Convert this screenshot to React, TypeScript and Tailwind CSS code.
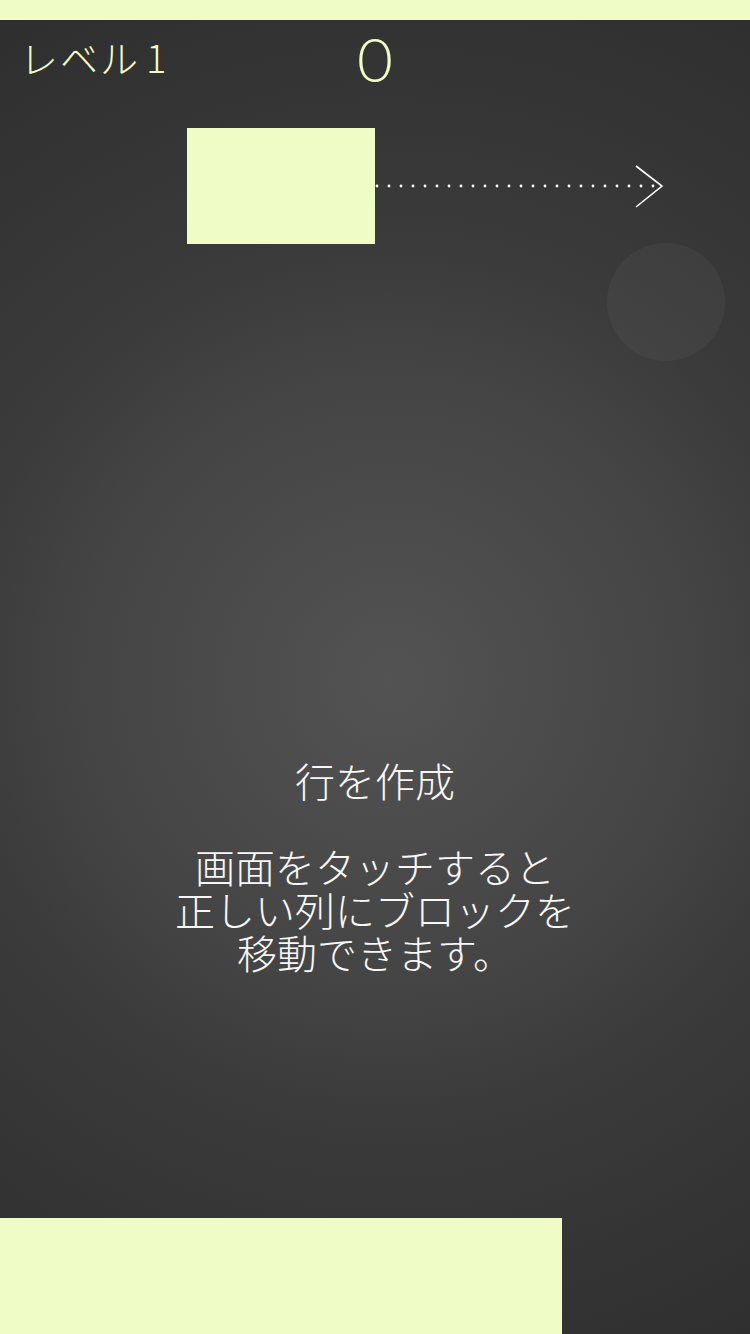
import React from "react";

export default function App() {
  const dots = Array.from({ length: 24 }, (_, k) => 2 + 12 * k);
  return (
    <div className="relative flex h-[1334px] w-[750px] flex-col overflow-hidden bg-[radial-gradient(circle_farthest-corner_at_390px_680px,#535353_0%,#444444_40%,#3b3b3b_55%,#353535_75%,#2e2e2e_100%)] font-['Noto_Sans_CJK_JP','Noto_Sans',sans-serif]">
      <div className="h-[20px] w-full shrink-0 bg-[#effcc6]" />
      <div className="grid h-[108px] shrink-0 grid-cols-3 text-[#effcc6]">
        <div className="pl-[20px] pt-[18px] text-[38px] font-light leading-none tracking-[2px]">
          レベル<span className="ml-[6px]">1</span>
        </div>
        <div className="pt-[7px] text-center font-['Lato','Noto_Sans',sans-serif] text-[62px] font-light leading-none">
          0
        </div>
        <div />
      </div>
      <div className="flex h-[116px] shrink-0 items-center">
        <div className="ml-[187px] h-[116px] w-[188px] bg-[#effcc6]" />
        <svg width="292" height="44" viewBox="0 0 292 44" className="shrink-0">
          {dots.map((x) => (
            <circle key={x} cx={x} cy={22} r={1.4} fill="#ffffff" />
          ))}
          <path d="M261 2 L287 22 L261 43" fill="none" stroke="#ffffff" strokeWidth="1.6" />
        </svg>
      </div>
      <div className="absolute left-[607px] top-[243px] h-[118px] w-[118px] rounded-full bg-white/[0.04]" />
      <div className="mt-[515px] text-center text-[40px] font-light leading-[43px] text-[#f7f7f7]">
        <p>行を作成</p>
        <p>&nbsp;</p>
        <p>画面をタッチすると</p>
        <p>正しい列にブロックを</p>
        <p>移動できます。</p>
      </div>
      <div className="mt-auto h-[116px] w-[562px] shrink-0 bg-[#effcc6]" />
    </div>
  );
}
